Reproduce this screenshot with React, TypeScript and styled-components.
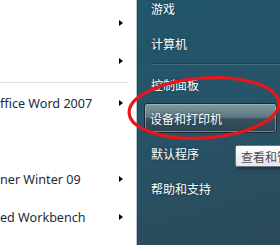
import * as React from 'react'
import styled, { createGlobalStyle } from 'styled-components'

const Global = createGlobalStyle`
  html, body { margin: 0; padding: 0; background: #fff; overflow: hidden; }
`

const Frame = styled.div`
  position: relative;
  width: 280px;
  height: 245px;
  display: flex;
  overflow: hidden;
`

const LeftPane = styled.div`
  width: 136px;
  background: #fff;
  border-right: 1px solid #b9c8d0;
  padding-top: 4px;
  display: flex;
  flex-direction: column;
`

const ProgramRow = styled.div`
  height: 38px;
  display: flex;
  align-items: center;
  justify-content: space-between;
  padding-right: 13px;
  font-family: "Noto Sans", "Open Sans", sans-serif;
  font-size: 12.6px;
  color: #1e2a3c;
  white-space: nowrap;
`

const Arrow = styled.span<{ hidden?: boolean }>`
  width: 0;
  height: 0;
  border-left: 4px solid #000;
  border-top: 3.5px solid transparent;
  border-bottom: 3.5px solid transparent;
  visibility: ${p => (p.hidden ? 'hidden' : 'visible')};
`

const LeftSep = styled.div`
  height: 4px;
  margin-right: 8px;
  display: flex;
  align-items: center;
  &::after { content: ''; flex: 1; height: 1px; background: #d6e1ec; }
`

const RightPane = styled.div`
  flex: 1;
  border-left: 1px solid #2a4350;
  background: linear-gradient(165deg, #21566c 0%, #265468 45%, #2b4a59 100%);
  display: flex;
  flex-direction: column;
  font-family: "Noto Sans CJK SC", "Noto Sans", sans-serif;
  font-size: 12px;
  color: #fff;
`

const Item = styled.div<{ first?: boolean }>`
  height: 35px;
  flex: none;
  display: flex;
  align-items: center;
  padding-left: 13px;
  margin-top: ${p => (p.first ? '-9px' : '0')};
  text-shadow: 0 0 3px rgba(0, 20, 30, 0.5);
`

const ActiveItem = styled.div`
  height: 28px;
  flex: none;
  margin: 1px 3px 3px 6px;
  display: flex;
  align-items: center;
  padding-left: 5px;
  border: 1px solid #1d2c33;
  border-radius: 3px;
  box-shadow: inset 0 0 0 1px rgba(190, 210, 215, 0.45);
  background: linear-gradient(180deg, #83989f 0%, #5f7a85 45%, #36515d 55%, #2c4652 100%);
  text-shadow: 0 0 3px rgba(0, 20, 30, 0.6);
`

const RightSep = styled.div`
  height: 0;
  margin: 2px 0 2px 13px;
  border-top: 1px solid #1d4152;
  border-bottom: 1px solid #43697a;
`

const Tooltip = styled.div`
  position: absolute;
  left: 235px;
  top: 145px;
  height: 20px;
  width: 70px;
  padding-left: 5px;
  display: flex;
  align-items: center;
  border: 1px solid #767676;
  border-radius: 2px;
  background: linear-gradient(180deg, #ffffff 0%, #e5e6ee 100%);
  box-shadow: 2px 2px 3px rgba(0, 0, 0, 0.35);
  font-family: "Noto Sans CJK SC", sans-serif;
  font-size: 12px;
  color: #4c4c4c;
  white-space: nowrap;
`

const Annotation = styled.svg`
  position: absolute;
  left: 0;
  top: 0;
  pointer-events: none;
`

const programs = [
  { label: '', arrow: true },
  { label: '', arrow: true },
  null,
  { label: 'ffice Word 2007', arrow: true },
  { label: '', arrow: false },
  { label: 'ner Winter 09', arrow: true },
  { label: 'ed Workbench', arrow: true },
]

const App: React.FC = () => {
  return (
    <Frame>
      <Global />
      <LeftPane>
        {programs.map((p, i) =>
          p ? (
            <ProgramRow key={i}>
              <span>{p.label}</span>
              <Arrow hidden={!p.arrow} />
            </ProgramRow>
          ) : (
            <LeftSep key={i} />
          )
        )}
      </LeftPane>
      <RightPane>
        <Item first>游戏</Item>
        <Item>计算机</Item>
        <RightSep />
        <Item>控制面板</Item>
        <ActiveItem>设备和打印机</ActiveItem>
        <Item>默认程序</Item>
        <Item>帮助和支持</Item>
      </RightPane>
      <Tooltip>查看和管理设备</Tooltip>
      <Annotation width="280" height="245" viewBox="0 0 280 245">
        <ellipse cx="204" cy="108" rx="75" ry="30" transform="rotate(-4 204 108)" fill="none" stroke="#e8161b" strokeWidth="3.2" />
      </Annotation>
    </Frame>
  )
}

export default App
